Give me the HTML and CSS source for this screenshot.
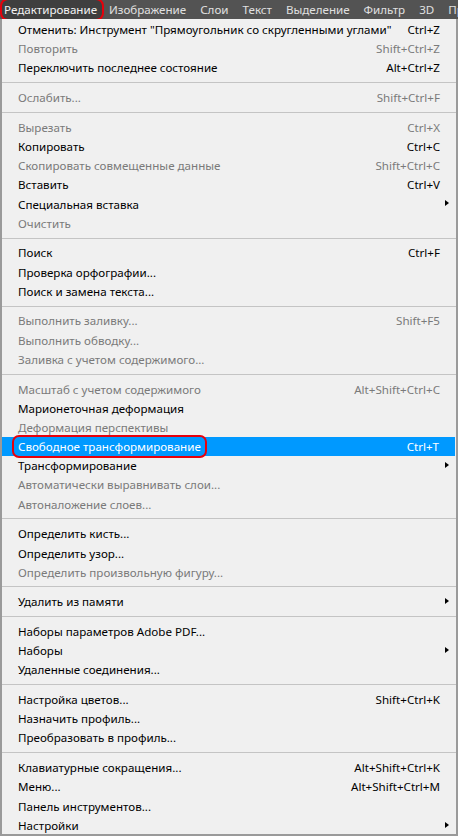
FILE: index.html
```html
<!DOCTYPE html>
<html lang="ru">
<head>
  <meta charset="UTF-8">
  <title>Редактирование</title>
  <link rel="stylesheet" href="styles.css">
</head>
<body>

  <div class="menubar">
    <div class="top open">Редактирование</div>
    <div class="top">Изображение</div>
    <div class="top">Слои</div>
    <div class="top">Текст</div>
    <div class="top">Выделение</div>
    <div class="top">Фильтр</div>
    <div class="top">3D</div>
    <div class="top">Пр</div>
  </div>

  <div class="menu">
    <div class="item"><span class="label">Отменить: Инструмент "Прямоугольник со скругленными углами"</span><span class="keys">Ctrl+Z</span></div>
    <div class="item off"><span class="label">Повторить</span><span class="keys">Shift+Ctrl+Z</span></div>
    <div class="item"><span class="label">Переключить последнее состояние</span><span class="keys">Alt+Ctrl+Z</span></div>
    <div class="sep"></div>
    <div class="item off"><span class="label">Ослабить...</span><span class="keys">Shift+Ctrl+F</span></div>
    <div class="sep"></div>
    <div class="item off"><span class="label">Вырезать</span><span class="keys">Ctrl+X</span></div>
    <div class="item"><span class="label">Копировать</span><span class="keys">Ctrl+C</span></div>
    <div class="item off"><span class="label">Скопировать совмещенные данные</span><span class="keys">Shift+Ctrl+C</span></div>
    <div class="item"><span class="label">Вставить</span><span class="keys">Ctrl+V</span></div>
    <div class="item sub"><span class="label">Специальная вставка</span></div>
    <div class="item off"><span class="label">Очистить</span></div>
    <div class="sep"></div>
    <div class="item"><span class="label">Поиск</span><span class="keys">Ctrl+F</span></div>
    <div class="item"><span class="label">Проверка орфографии...</span></div>
    <div class="item"><span class="label">Поиск и замена текста...</span></div>
    <div class="sep"></div>
    <div class="item off"><span class="label">Выполнить заливку...</span><span class="keys">Shift+F5</span></div>
    <div class="item off"><span class="label">Выполнить обводку...</span></div>
    <div class="item off"><span class="label">Заливка с учетом содержимого...</span></div>
    <div class="sep"></div>
    <div class="item off"><span class="label">Масштаб с учетом содержимого</span><span class="keys">Alt+Shift+Ctrl+C</span></div>
    <div class="item"><span class="label">Марионеточная деформация</span></div>
    <div class="item off"><span class="label">Деформация перспективы</span></div>
    <div class="item hot"><span class="label marked">Свободное трансформирование</span><span class="keys">Ctrl+T</span></div>
    <div class="item sub"><span class="label">Трансформирование</span></div>
    <div class="item off"><span class="label">Автоматически выравнивать слои...</span></div>
    <div class="item off"><span class="label">Автоналожение слоев...</span></div>
    <div class="sep"></div>
    <div class="item"><span class="label">Определить кисть...</span></div>
    <div class="item"><span class="label">Определить узор...</span></div>
    <div class="item off"><span class="label">Определить произвольную фигуру...</span></div>
    <div class="sep"></div>
    <div class="item sub"><span class="label">Удалить из памяти</span></div>
    <div class="sep"></div>
    <div class="item"><span class="label">Наборы параметров Adobe PDF...</span></div>
    <div class="item sub"><span class="label">Наборы</span></div>
    <div class="item"><span class="label">Удаленные соединения...</span></div>
    <div class="sep"></div>
    <div class="item"><span class="label">Настройка цветов...</span><span class="keys">Shift+Ctrl+K</span></div>
    <div class="item"><span class="label">Назначить профиль...</span></div>
    <div class="item"><span class="label">Преобразовать в профиль...</span></div>
    <div class="sep"></div>
    <div class="item"><span class="label">Клавиатурные сокращения...</span><span class="keys">Alt+Shift+Ctrl+K</span></div>
    <div class="item"><span class="label">Меню...</span><span class="keys">Alt+Shift+Ctrl+M</span></div>
    <div class="item"><span class="label">Панель инструментов...</span></div>
    <div class="item sub"><span class="label">Настройки</span></div>
  </div>

</body>
</html>
```

FILE: styles.css
```css
body {
  margin: 0;
  font-family: "Noto Sans", "Open Sans", sans-serif;
  font-size: 11.6px;
  background: #f0f0f0;
  width: 458px;
  height: 836px;
  overflow: hidden;
}

.menubar {
  display: flex;
  height: 19px;
  background: #535353;
  white-space: nowrap;
  overflow: hidden;
}

.top {
  color: #e0e0e0;
  padding: 0 7px;
  line-height: 19px;
}

.top.open {
  background: #3f3f3f;
  color: #f2f2f2;
  margin-left: 2px;
  padding: 0 5px 0 2px;
  border-radius: 6px;
  box-shadow: 0 0 0 2px #e8000b;
}

.menu {
  height: 817px;
  border: 2px solid #9a9a9a;
  border-top: none;
  box-sizing: border-box;
  padding-top: 1px;
}

.item {
  display: flex;
  align-items: center;
  height: 19.2px;
  padding: 0 16px 0 16px;
  position: relative;
  white-space: nowrap;
  color: #000;
}

.item.off {
  color: #7a7a7a;
}

.label {
  flex: 1;
}

.item.sub::after {
  content: "";
  position: absolute;
  right: 7px;
  top: 6px;
  border-left: 4px solid #000;
  border-top: 3.5px solid transparent;
  border-bottom: 3.5px solid transparent;
}

.item.hot {
  background: #0099ff;
  color: #fff;
  margin-right: 1px;
}

.marked {
  flex: none;
  margin-left: -6px;
  padding: 1px 4px 1px 4px;
  line-height: 17px;
  border: 2px solid #e8000b;
  border-radius: 7px;
  margin-right: auto;
}

.sep {
  height: 1px;
  background: #c4c4c4;
  margin: 4.7px 0 4.8px;
}
```
